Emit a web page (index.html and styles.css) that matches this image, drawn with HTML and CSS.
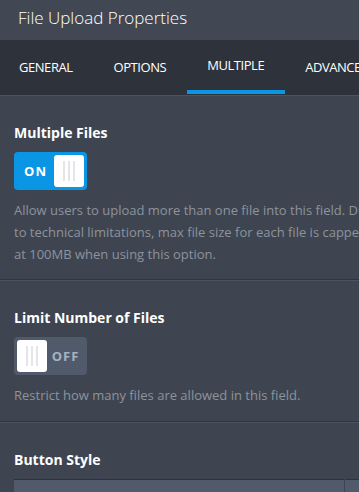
FILE: index.html
```html
<!DOCTYPE html>
<html lang="en">
<head>
    <meta charset="UTF-8">
    <meta name="viewport" content="width=device-width, initial-scale=1.0">
    <title>File Upload Properties</title>
    <link rel="stylesheet" href="styles.css">
</head>
<body>
    <div class="panel">
        <div class="panel-header">File Upload Properties</div>
        <div class="tabs">
            <div class="tab">GENERAL</div>
            <div class="tab">OPTIONS</div>
            <div class="tab active">MULTIPLE</div>
            <div class="tab">ADVANCED</div>
        </div>

        <div class="section">
            <h2>Multiple Files</h2>
            <div class="toggle on">
                <span class="toggle-label">ON</span>
                <span class="knob"><i></i><i></i><i></i></span>
            </div>
            <p class="help">Allow users to upload more than one file into this field. Due to technical limitations, max file size for each file is capped at 100MB when using this option.</p>
        </div>

        <div class="section">
            <h2>Limit Number of Files</h2>
            <div class="toggle off">
                <span class="knob"><i></i><i></i><i></i></span>
                <span class="toggle-label">OFF</span>
            </div>
            <p class="help">Restrict how many files are allowed in this field.</p>
        </div>

        <div class="section last">
            <h2>Button Style</h2>
            <div class="select-row">
                <div class="select"></div>
                <div class="select-side"></div>
            </div>
        </div>
    </div>
</body>
</html>
```

FILE: styles.css
```css
/* Reset */
* {
    margin: 0;
    padding: 0;
    box-sizing: border-box;
}

body, html {
    height: 100%;
    overflow: hidden;
}

body {
    background-color: #3e4550;
    font-family: 'Open Sans', sans-serif;
}

/* Panel wider than the window, cut at the right edge */
.panel {
    width: 420px;
}

.panel-header {
    height: 40px;
    padding-left: 18px;
    line-height: 36px;
    background-color: #414854;
    color: #fff;
    font-size: 17px;
    font-weight: 300;
}

/* Tab bar */
.tabs {
    display: flex;
    height: 56px;
    background-color: #2e333b;
    border-bottom: 1px solid #4b5261;
}

.tab {
    height: 55px;
    padding: 0 21px 0 20px;
    line-height: 55px;
    color: #fff;
    font-size: 13px;
    letter-spacing: -0.45px;
    white-space: nowrap;
}

.tab:first-child {
    margin-left: -1px;
}

.tab.active {
    height: 54px;
    line-height: 50px;
    border-bottom: 4px solid #0a96e4;
}

/* Sections */
.section {
    padding: 27px 14px 14px;
    border-bottom: 1px solid #30353d;
}

.section + .section {
    border-top: 1px solid #4b5261;
    padding-bottom: 15px;
}

.section h2 {
    color: #fff;
    font-size: 14px;
    font-weight: 700;
    line-height: 19px;
    margin-bottom: 10px;
}

.help {
    width: 365px;
    margin-top: 9px;
    color: #8d939d;
    font-size: 13px;
    line-height: 22px;
}

/* Toggle switch */
.toggle {
    display: flex;
    align-items: center;
    width: 73px;
    height: 38px;
    padding: 3px;
    border-radius: 4px;
}

.toggle.on {
    background-color: #0a96e4;
}

.toggle.off {
    background-color: #505a6b;
}

.toggle-label {
    flex: 1;
    text-align: center;
    font-size: 13px;
    font-weight: 700;
    letter-spacing: 1px;
}

.toggle.on .toggle-label {
    color: #fff;
}

.toggle.off .toggle-label {
    color: #a9b1bf;
}

.knob {
    display: flex;
    justify-content: center;
    gap: 3px;
    width: 30px;
    height: 32px;
    background-color: #fff;
    border-radius: 3px;
    padding: 6px 0;
}

.knob i {
    width: 2px;
    background-color: #e3e5e8;
}

/* Select placeholder at the bottom */
.section.last {
    border-bottom: none;
}

.select-row {
    display: flex;
    gap: 1px;
}

.select {
    width: 330px;
    height: 40px;
    background-color: #505a6b;
    border-top: 1px solid #2e333b;
}

.select-side {
    flex: 1;
    height: 40px;
    background-color: #505a6b;
    border-top: 1px solid #2e333b;
}
```
